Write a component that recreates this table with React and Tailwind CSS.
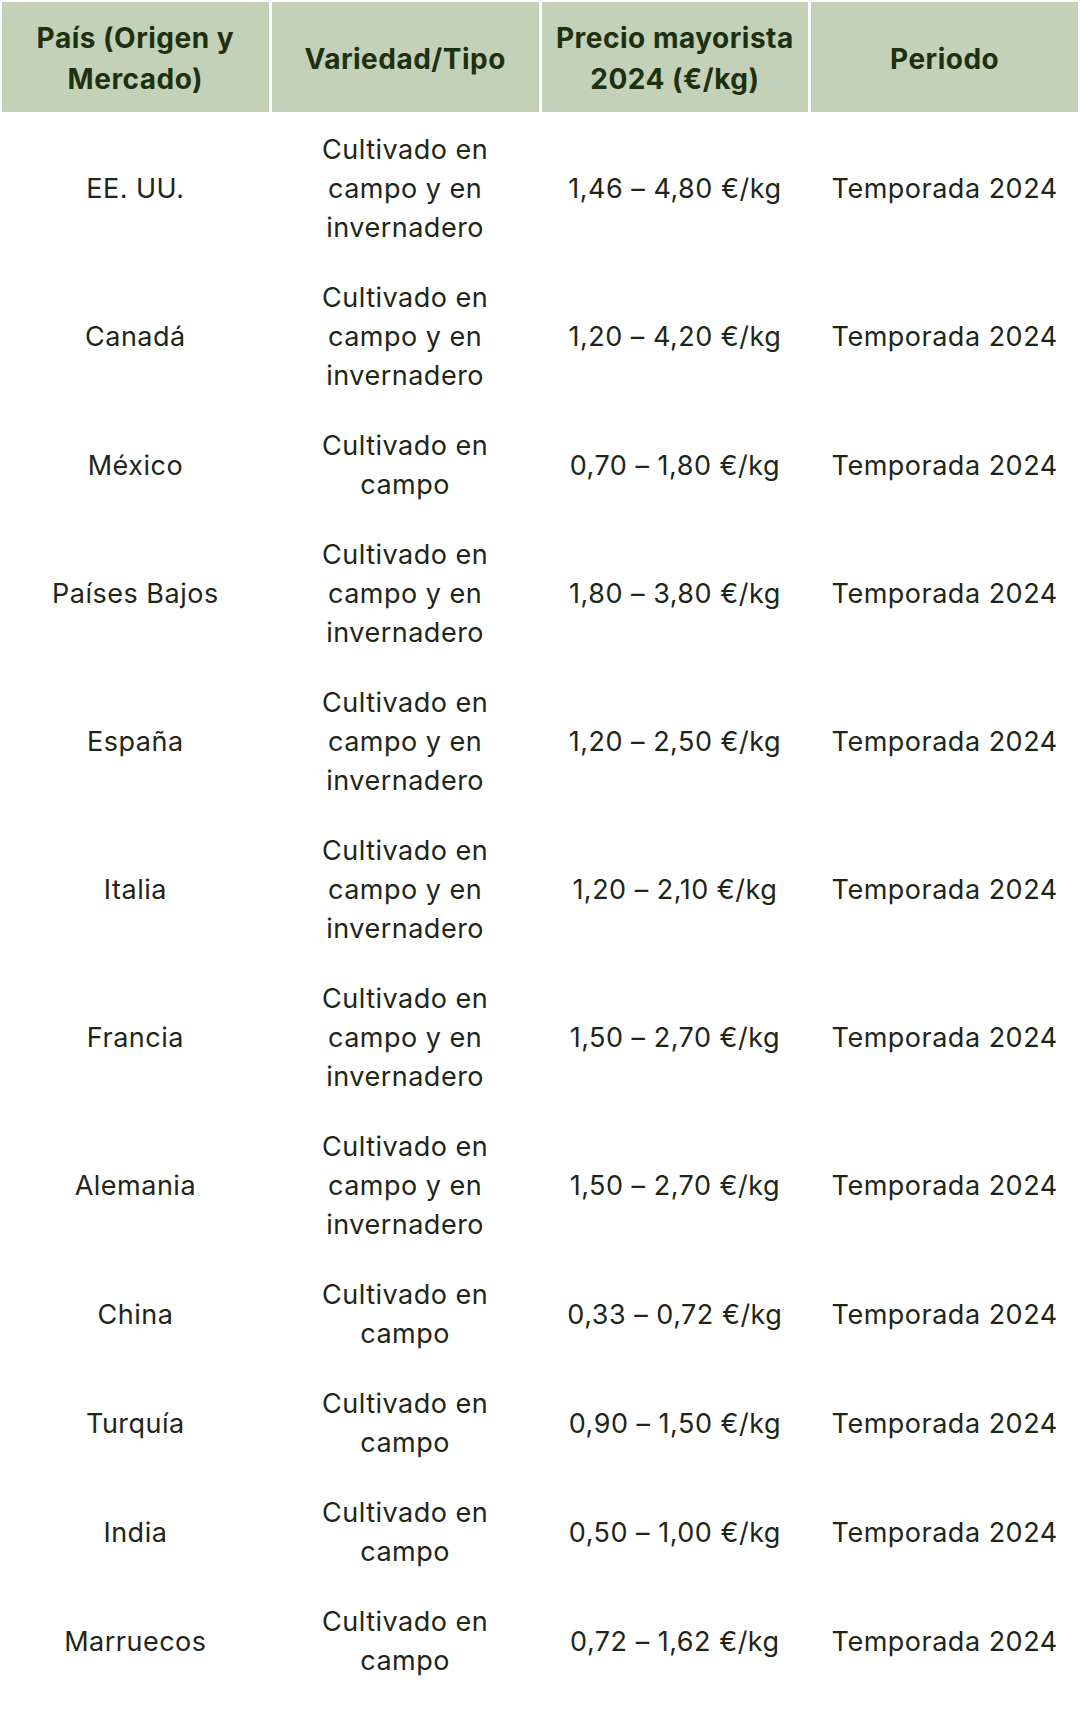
const headers = ["País (Origen y Mercado)", "Variedad/Tipo", "Precio mayorista 2024 (€/kg)", "Periodo"];

const both = "Cultivado en campo y en invernadero";
const field = "Cultivado en campo";

const rows = [
  ["EE. UU.", both, "1,46 – 4,80 €/kg"],
  ["Canadá", both, "1,20 – 4,20 €/kg"],
  ["México", field, "0,70 – 1,80 €/kg"],
  ["Países Bajos", both, "1,80 – 3,80 €/kg"],
  ["España", both, "1,20 – 2,50 €/kg"],
  ["Italia", both, "1,20 – 2,10 €/kg"],
  ["Francia", both, "1,50 – 2,70 €/kg"],
  ["Alemania", both, "1,50 – 2,70 €/kg"],
  ["China", field, "0,33 – 0,72 €/kg"],
  ["Turquía", field, "0,90 – 1,50 €/kg"],
  ["India", field, "0,50 – 1,00 €/kg"],
  ["Marruecos", field, "0,72 – 1,62 €/kg"],
];

export default function App() {
  return (
    <div className="min-h-[1729px] w-[1080px] bg-white font-['Inter',sans-serif]">
      <div className="grid grid-cols-4 gap-[3px] p-[2px]">
        {headers.map((h) => (
          <div
            key={h}
            className="flex items-center justify-center bg-[#c3d1b8] px-2 pt-[16px] pb-[12px] text-center text-[28px] font-bold leading-[41px] tracking-[0.5px] text-[#1d3010]"
          >
            <span className={h.startsWith("País") ? "max-w-[220px]" : ""}>{h}</span>
          </div>
        ))}
        {rows.map((r) => (
          <Row key={r[0]} row={r} />
        ))}
      </div>
    </div>
  );
}

function Row({ row }) {
  const cells = [...row, "Temporada 2024"];
  return cells.map((c, i) => (
    <div
      key={i}
      className="flex items-center justify-center px-2 pt-[15px] pb-[13px] text-center text-[27px] leading-[39px] tracking-[0.5px] text-[#1e2617]"
    >
      <span className={i === 1 ? "max-w-[190px]" : ""}>{c}</span>
    </div>
  ));
}
